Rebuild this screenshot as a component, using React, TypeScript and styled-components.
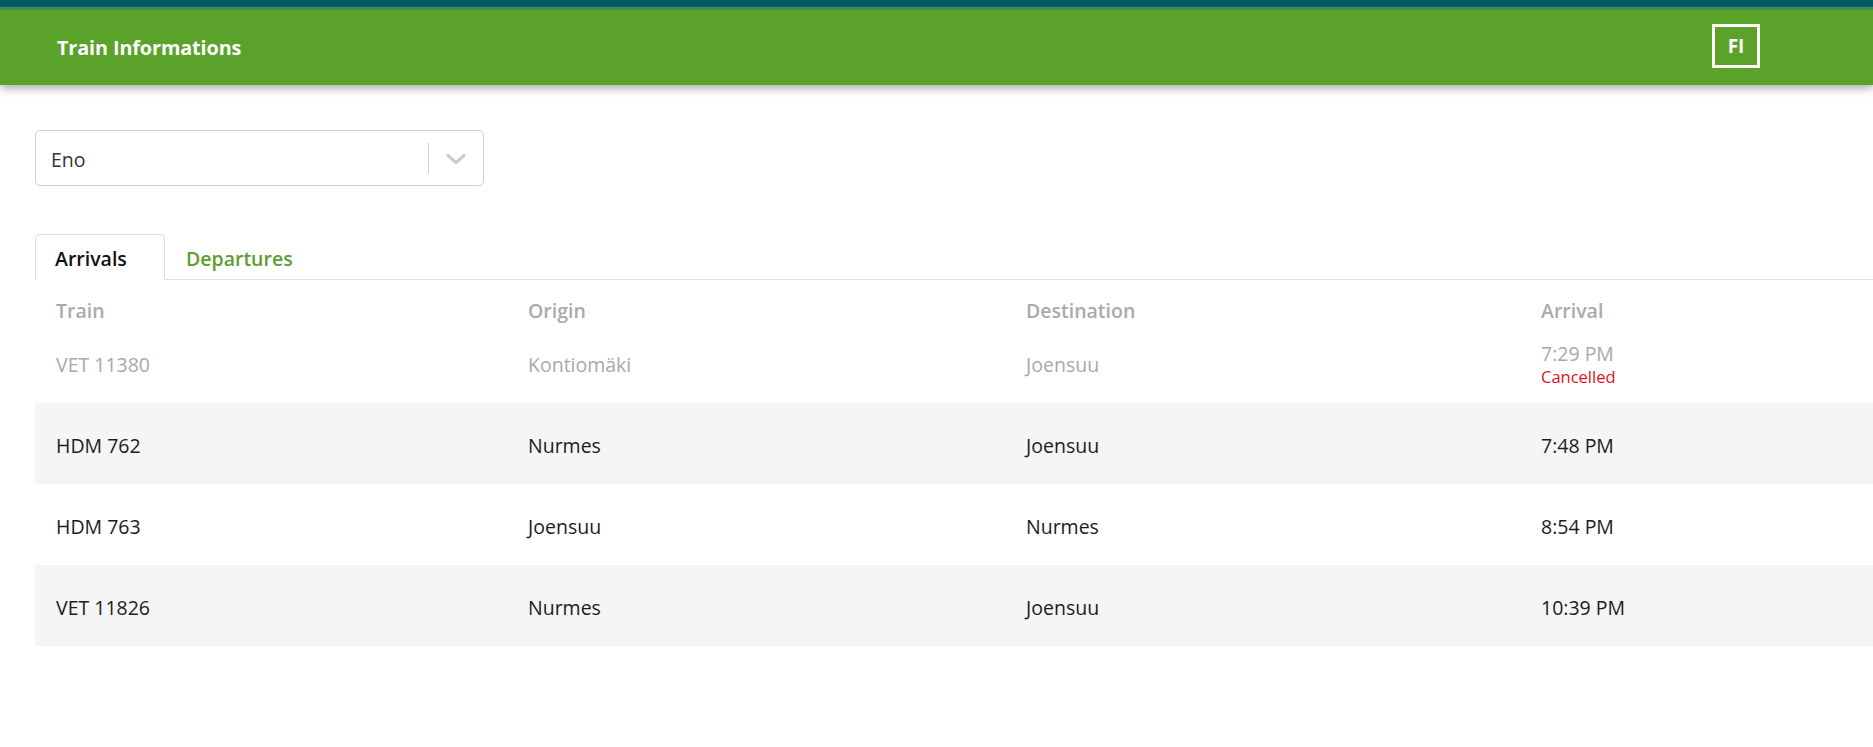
import React from "react";
import styled, { createGlobalStyle } from "styled-components";

const GlobalStyle = createGlobalStyle`
  html, body { margin: 0; padding: 0; background: #fff; }
  body {
    font-family: "Open Sans", "Noto Sans", Arial, sans-serif;
    color: #1c1c1c;
    overflow: hidden;
  }
`;

const TopBar = styled.header`
  height: 75px;
  border-top: 7px solid #035a62;
  box-shadow: inset 0 3px 0 #3f8a56, 0 3px 9px rgba(0, 0, 0, 0.35);
  background: #5aa229;
  display: flex;
  align-items: center;
  justify-content: space-between;
  padding: 3px 113px 0 57px;
  position: relative;
  z-index: 1;
`;

const Title = styled.h1`
  margin: 0;
  font-size: 19.8px;
  font-weight: 700;
  color: #fff;
  letter-spacing: -0.1px;
`;

const LangButton = styled.button`
  width: 48px;
  height: 44px;
  box-sizing: border-box;
  border: 3px solid #fff;
  background: transparent;
  color: #fff;
  font-family: inherit;
  font-size: 19px;
  font-weight: 700;
  display: flex;
  align-items: center;
  justify-content: center;
  padding: 0;
  margin-top: -4px;
`;

const Main = styled.main`
  padding: 45px 0 0 35px;
`;

const Select = styled.div`
  width: 449px;
  height: 56px;
  box-sizing: border-box;
  border: 1px solid #cccccc;
  border-radius: 5px;
  display: flex;
  align-items: center;
`;

const SelectValue = styled.div`
  flex: 1;
  padding-left: 15px;
  padding-top: 2px;
  font-size: 19.5px;
  color: #333;
`;

const Separator = styled.span`
  width: 1px;
  height: 30px;
  background: #cccccc;
`;

const Chevron = styled.div`
  width: 54px;
  display: flex;
  align-items: center;
  justify-content: center;
  color: #cccccc;
  padding-top: 2px;
`;

const TabList = styled.div`
  margin-top: 48px;
  display: flex;
  border-bottom: 1px solid #dddddd;
`;

const Tab = styled.div<{ $active?: boolean }>`
  height: 46px;
  box-sizing: border-box;
  display: flex;
  align-items: center;
  padding-top: 3px;
  font-size: 19.5px;
  font-weight: 600;
  margin-bottom: -1px;
  ${({ $active }) =>
    $active
      ? `
    width: 130px;
    padding-left: 19px;
    border: 1px solid #dddddd;
    border-bottom-color: #fff;
    border-radius: 5px 5px 0 0;
    background: #fff;
    color: #111;
  `
      : `
    padding-left: 20px;
    color: #5c9e30;
    border: 1px solid transparent;
  `}
`;

const Grid = styled.div`
  display: grid;
  grid-template-columns: 472px 498px 515px 1fr;
`;

const HeadRow = styled(Grid)`
  height: 42px;
  box-sizing: border-box;
  padding-top: 17px;
`;

const HeadCell = styled.div`
  padding-left: 21px;
  font-size: 19.5px;
  line-height: 27px;
  font-weight: 600;
  color: #aaaaaa;
`;

const Row = styled(Grid)<{ $striped?: boolean; $cancelled?: boolean }>`
  height: 81px;
  align-items: center;
  background: ${({ $striped }) => ($striped ? "#f5f5f5" : "#fff")};
  color: ${({ $cancelled }) => ($cancelled ? "#a9a9a9" : "#1c1c1c")};
`;

const Cell = styled.div`
  padding-left: 21px;
  padding-top: 4px;
  font-size: 19.5px;
  line-height: 25px;
`;

const Status = styled.div`
  font-size: 16.5px;
  line-height: 22px;
  color: #d8141e;
`;

type Train = {
  id: string;
  origin: string;
  destination: string;
  time: string;
  cancelled?: boolean;
};

const trains: Train[] = [
  { id: "VET 11380", origin: "Kontiomäki", destination: "Joensuu", time: "7:29 PM", cancelled: true },
  { id: "HDM 762", origin: "Nurmes", destination: "Joensuu", time: "7:48 PM" },
  { id: "HDM 763", origin: "Joensuu", destination: "Nurmes", time: "8:54 PM" },
  { id: "VET 11826", origin: "Nurmes", destination: "Joensuu", time: "10:39 PM" },
];

export default function App() {
  return (
    <>
      <GlobalStyle />
      <TopBar>
        <Title>Train Informations</Title>
        <LangButton>FI</LangButton>
      </TopBar>
      <Main>
        <Select>
          <SelectValue>Eno</SelectValue>
          <Separator />
          <Chevron>
            <svg width="22" height="14" viewBox="0 0 22 14" fill="none">
              <polyline
                points="3,3.5 11,10.5 19,3.5"
                stroke="currentColor"
                strokeWidth="3.2"
                strokeLinecap="round"
                strokeLinejoin="round"
              />
            </svg>
          </Chevron>
        </Select>
        <TabList>
          <Tab $active>Arrivals</Tab>
          <Tab>Departures</Tab>
        </TabList>
        <HeadRow>
          <HeadCell>Train</HeadCell>
          <HeadCell>Origin</HeadCell>
          <HeadCell>Destination</HeadCell>
          <HeadCell>Arrival</HeadCell>
        </HeadRow>
        {trains.map((t, i) => (
          <Row key={t.id} $striped={i % 2 === 1} $cancelled={t.cancelled}>
            <Cell>{t.id}</Cell>
            <Cell>{t.origin}</Cell>
            <Cell>{t.destination}</Cell>
            <Cell>
              {t.time}
              {t.cancelled && <Status>Cancelled</Status>}
            </Cell>
          </Row>
        ))}
      </Main>
    </>
  );
}
